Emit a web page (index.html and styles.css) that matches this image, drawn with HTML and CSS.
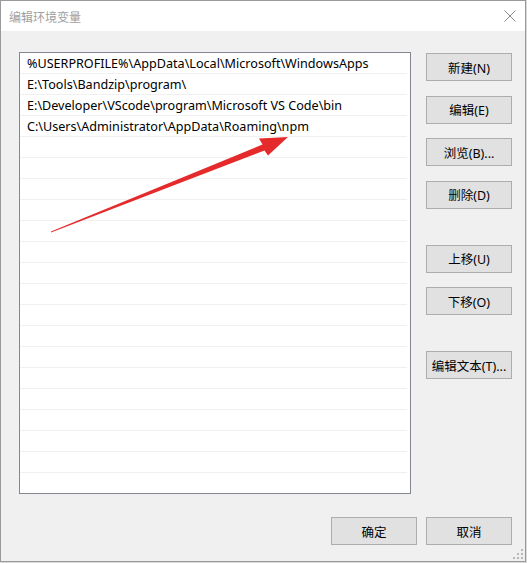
FILE: index.html
```html
<!DOCTYPE html>
<html lang="zh-CN">
<head>
<meta charset="utf-8">
<title>编辑环境变量</title>
<link rel="stylesheet" href="styles.css">
</head>
<body>
<div class="window">
  <div class="titlebar">
    <span class="title">编辑环境变量</span>
    <svg class="close" width="12" height="12" viewBox="0 0 12 12"><path d="M0.5 0.5 L11.5 11.5 M11.5 0.5 L0.5 11.5" stroke="#8a8a8a" stroke-width="1" fill="none"/></svg>
  </div>
  <div class="content">
    <div class="main">
      <div class="list">
        <div class="row">%USERPROFILE%\AppData\Local\Microsoft\WindowsApps</div>
        <div class="row">E:\Tools\Bandzip\program\</div>
        <div class="row">E:\Developer\VScode\program\Microsoft VS Code\bin</div>
        <div class="row">C:\Users\Administrator\AppData\Roaming\npm</div>
        <div class="row"></div><div class="row"></div><div class="row"></div><div class="row"></div>
        <div class="row"></div><div class="row"></div><div class="row"></div><div class="row"></div>
        <div class="row"></div><div class="row"></div><div class="row"></div><div class="row"></div>
        <div class="row"></div><div class="row"></div><div class="row"></div><div class="row"></div>
        <div class="row last"></div>
      </div>
      <div class="side">
        <div class="group">
          <button class="btn">新建(N)</button>
          <button class="btn">编辑(E)</button>
          <button class="btn">浏览(B)...</button>
          <button class="btn">删除(D)</button>
        </div>
        <div class="group">
          <button class="btn">上移(U)</button>
          <button class="btn">下移(O)</button>
        </div>
        <div class="group">
          <button class="btn">编辑文本(T)...</button>
        </div>
      </div>
    </div>
    <div class="footer">
      <button class="btn">确定</button>
      <button class="btn">取消</button>
    </div>
  </div>
  <svg class="grip" width="10" height="10" viewBox="0 0 10 10">
    <rect x="8" y="0" width="2" height="2" fill="#b8b8b8"/>
    <rect x="4" y="4" width="2" height="2" fill="#b8b8b8"/>
    <rect x="8" y="4" width="2" height="2" fill="#b8b8b8"/>
    <rect x="0" y="8" width="2" height="2" fill="#b8b8b8"/>
    <rect x="4" y="8" width="2" height="2" fill="#b8b8b8"/>
    <rect x="8" y="8" width="2" height="2" fill="#b8b8b8"/>
  </svg>
  <svg class="arrow" width="527" height="563" viewBox="0 0 527 563">
    <polygon fill="#e52a2b" points="51,232.5 264.5,150.5 268,155.5 288,137 259,138.5 262.5,144.5 51,231.5"/>
  </svg>
</div>
</body>
</html>
```

FILE: styles.css
```css
* { box-sizing: border-box; }
html, body { margin: 0; padding: 0; }
body {
  width: 527px;
  height: 563px;
  background: #d9d9d9;
  font-family: "Noto Sans", "Noto Sans CJK SC", sans-serif;
  font-size: 12px;
  color: #000;
  overflow: hidden;
}
.window {
  position: relative;
  width: 526px;
  height: 562px;
  border: 1px solid #9a9a9a;
  background: #f0f0f0;
  display: flex;
  flex-direction: column;
}
.titlebar {
  height: 30px;
  background: #fff;
  display: flex;
  align-items: center;
  justify-content: space-between;
  padding: 0 8px 0 8px;
  flex: none;
}
.title {
  font-family: "Noto Sans CJK SC", sans-serif;
  font-size: 12px;
  color: #a0a0a0;
}
.close { margin-right: 1px; }
.content {
  flex: 1;
  padding: 21px 13px 16px 18px;
  display: flex;
  flex-direction: column;
}
.main {
  display: flex;
  gap: 15px;
}
.list {
  width: 392px;
  height: 442px;
  background: #fff;
  border: 1px solid #828790;
  padding-right: 3px;
  overflow: hidden;
}
.row {
  height: 21px;
  border-bottom: 1px solid #f0f0f0;
  padding: 1px 0 0 7px;
  line-height: 20px;
  font-size: 12.6px;
  white-space: nowrap;
}
.row.last { border-bottom: none; }
.side {
  width: 86px;
  display: flex;
  flex-direction: column;
  gap: 36px;
  padding-top: 1px;
}
.group {
  display: flex;
  flex-direction: column;
  gap: 14.5px;
}
.btn {
  width: 86px;
  height: 28px;
  background: #e1e1e1;
  border: 1px solid #adadad;
  border-radius: 0;
  padding: 0;
  font-family: "Noto Sans", "Noto Sans CJK SC", sans-serif;
  font-size: 12.5px;
  color: #000;
}
.footer {
  margin-top: 23px;
  display: flex;
  justify-content: flex-end;
  gap: 9px;
}
.grip {
  position: absolute;
  right: 2px;
  bottom: 2px;
}
.arrow {
  position: absolute;
  left: -1px;
  top: -1px;
  pointer-events: none;
}
```
